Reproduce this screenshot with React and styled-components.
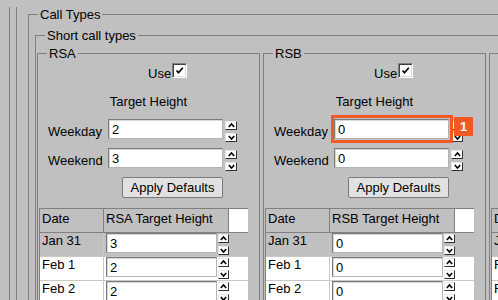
import React from 'react';
import styled, { createGlobalStyle } from 'styled-components';

const GlobalStyle = createGlobalStyle`
  html, body { margin: 0; padding: 0; overflow: hidden; }
  body {
    width: 498px;
    height: 300px;
    background: #c0c0c0;
    font-family: "Liberation Sans", Arial, sans-serif;
    font-size: 13px;
    color: #000;
  }
`;

const Frame = styled.div`
  height: 300px;
  margin-left: 9px;
  padding-left: 6px;
  border-left: 1px solid #808080;
`;

const InnerFrame = styled.div`
  height: 100%;
  padding-left: 11px;
  border-left: 1px solid #808080;
`;

const Group = styled.fieldset`
  flex: none;
  box-sizing: border-box;
  width: ${({ $width }) => ($width ? `${$width}px` : 'auto')};
  min-width: 0;
  margin: ${({ $top }) => $top || 0}px 0 0;
  padding: 0 ${({ $pad }) => $pad || 0}px;
  border: 1px solid #808080;

  & > legend {
    margin-left: ${({ $pad }) => 9 - ($pad || 0)}px;
    padding: 0 2px;
    line-height: 15px;
  }
`;

const GroupRow = styled.div`
  display: flex;
  gap: 3px;
`;

const UseRow = styled.div`
  display: flex;
  align-items: baseline;
  gap: 1px;
  padding: 2px 0 0 110px;
  line-height: 15px;
`;

const CheckBox = styled.span`
  display: block;
  box-sizing: border-box;
  width: 15px;
  height: 15px;
  background: #fff;
  border: 1px solid;
  border-color: #808080 #fff #fff #808080;
  box-shadow: inset 1px 1px #404040, inset -1px -1px #dfdfdf;

  svg { display: block; margin: 2px 0 0 2px; }
`;

const Title = styled.div`
  margin-top: 13px;
  line-height: 15px;
  text-align: center;
`;

const FieldRow = styled.div`
  display: flex;
  align-items: center;
  height: 20px;
  margin-top: ${({ $gap }) => $gap}px;
  padding-left: 10px;
`;

const FieldLabel = styled.span`
  width: 52px;
  margin-right: 8px;
  padding-top: 4px;
  line-height: 15px;
  text-align: right;
`;

const Box = styled.span`
  position: relative;
  display: block;
  flex: none;
`;

const TextInput = styled.input`
  display: block;
  box-sizing: border-box;
  width: ${({ $w }) => $w}px;
  height: 20px;
  margin: 0;
  padding: 1px 0 0 3px;
  font: inherit;
  color: #000;
  background: #fff;
  border: 1px solid;
  border-color: #7a7a7a #b4b4b4 #b4b4b4 #7a7a7a;
  box-shadow: inset 1px 1px #d8d8d8;
  outline: none;
`;

const Spinner = styled.span`
  display: flex;
  flex-direction: column;
  gap: ${({ $gap }) => $gap}px;
  align-self: flex-start;
  margin: ${({ $top }) => $top}px 0 -4px ${({ $left }) => $left}px;
`;

const SpinButton = styled.span`
  display: block;
  box-sizing: border-box;
  width: ${({ $w }) => $w}px;
  height: 9px;
  background: #fff;
  border: 1px solid;
  border-color: #e8e8e8 #303030 #303030 #e8e8e8;

  svg { display: block; margin: 0 auto; }
`;

const Highlight = styled.span`
  position: absolute;
  inset: -4px -4px -4px -3px;
  border: 3px solid #f15a24;
  pointer-events: none;
`;

const Badge = styled.span`
  position: absolute;
  top: -2px;
  left: calc(100% + 5px);
  width: 19px;
  height: 19px;
  background: #f15a24;
  color: #fff;
  font-weight: bold;
  font-size: 13px;
  line-height: 19px;
  text-align: center;
`;

const ApplyButton = styled.button`
  display: block;
  box-sizing: border-box;
  width: 101px;
  height: 21px;
  margin: 9px 0 0 84px;
  padding: 0;
  font: inherit;
  color: #000;
  background: #e1e1e1;
  border: 1px solid #7a7a7a;
  border-radius: 2px;
`;

const Table = styled.div`
  width: 208px;
  margin: 10px 0 0 1px;
  background: #fff;
  border-top: 1px solid #808080;
  border-left: 1px solid #808080;
`;

const TableRow = styled.div`
  display: flex;
  box-sizing: border-box;
  height: 24px;
  background: ${({ $shade }) => ($shade ? '#c0c0c0' : 'transparent')};
  border-bottom: ${({ $head }) => ($head ? '1px solid #808080' : '1px solid #c8c8c8')};
`;

const HeadCell = styled.div`
  box-sizing: border-box;
  width: ${({ $w }) => $w}px;
  padding: 2px 0 0 2px;
  line-height: 15px;
  background: #c0c0c0;
  border-right: 1px solid #808080;
`;

const DateCell = styled.div`
  box-sizing: border-box;
  width: 64px;
  padding-left: 2px;
  line-height: 15px;
  border-right: 1px solid #c8c8c8;
`;

const ValueCell = styled.div`
  display: flex;
  box-sizing: border-box;
  width: 125px;
  padding-left: 2px;
`;

function Check() {
  return (
    <CheckBox>
      <svg width="9" height="9" viewBox="0 0 9 9">
        <path d="M1.5 4.5 L3.5 6.8 L7.8 1.8" fill="none" stroke="#000" strokeWidth="1.7" />
      </svg>
    </CheckBox>
  );
}

function Spin({ w = 12, gap = 3, top = 2, left = 2 }) {
  return (
    <Spinner $gap={gap} $top={top} $left={left}>
      <SpinButton $w={w}>
        <svg width="7" height="7" viewBox="0 0 7 7">
          <path d="M0.8 5 L3.5 2 L6.2 5" fill="none" stroke="#000" strokeWidth="1.6" />
        </svg>
      </SpinButton>
      <SpinButton $w={w}>
        <svg width="7" height="7" viewBox="0 0 7 7">
          <path d="M0.8 2 L3.5 5 L6.2 2" fill="none" stroke="#000" strokeWidth="1.6" />
        </svg>
      </SpinButton>
    </Spinner>
  );
}

function Field({ label, value, gap, marked }) {
  return (
    <FieldRow $gap={gap}>
      <FieldLabel>{label}</FieldLabel>
      <Box>
        <TextInput $w={115} defaultValue={value} />
        {marked && (
          <>
            <Highlight />
            <Badge>1</Badge>
          </>
        )}
      </Box>
      <Spin />
    </FieldRow>
  );
}

function Panel({ name, weekday, weekend, rows, marked }) {
  return (
    <Group $width={223} $top={3}>
      <legend>{name}</legend>
      <UseRow>
        <span>Use</span>
        <Check />
      </UseRow>
      <Title>Target Height</Title>
      <Field label="Weekday" value={weekday} gap={10} marked={marked} />
      <Field label="Weekend" value={weekend} gap={9} />
      <ApplyButton>Apply Defaults</ApplyButton>
      <Table>
        <TableRow $head>
          <HeadCell $w={64}>Date</HeadCell>
          <HeadCell $w={125}>{name} Target Height</HeadCell>
        </TableRow>
        {rows.map((r, i) => (
          <TableRow key={r.date} $shade={i === 0}>
            <DateCell>{r.date}</DateCell>
            <ValueCell>
              <TextInput $w={111} defaultValue={r.value} />
              <Spin w={11} gap={3} top={1} left={1} />
            </ValueCell>
          </TableRow>
        ))}
      </Table>
    </Group>
  );
}

const rsaRows = [
  { date: 'Jan 31', value: '3' },
  { date: 'Feb 1', value: '2' },
  { date: 'Feb 2', value: '2' },
];

const zeroRows = [
  { date: 'Jan 31', value: '0' },
  { date: 'Feb 1', value: '0' },
  { date: 'Feb 2', value: '0' },
];

export default function App() {
  return (
    <>
      <GlobalStyle />
      <Frame>
        <InnerFrame>
          <Group $width={900} $top={7} $pad={6}>
            <legend>Call Types</legend>
            <Group $width={800} $top={6} $pad={1}>
              <legend>Short call types</legend>
              <GroupRow>
                <Panel name="RSA" weekday="2" weekend="3" rows={rsaRows} />
                <Panel name="RSB" weekday="0" weekend="0" rows={zeroRows} marked />
                <Panel name="RSC" weekday="0" weekend="0" rows={zeroRows} />
              </GroupRow>
            </Group>
          </Group>
        </InnerFrame>
      </Frame>
    </>
  );
}
